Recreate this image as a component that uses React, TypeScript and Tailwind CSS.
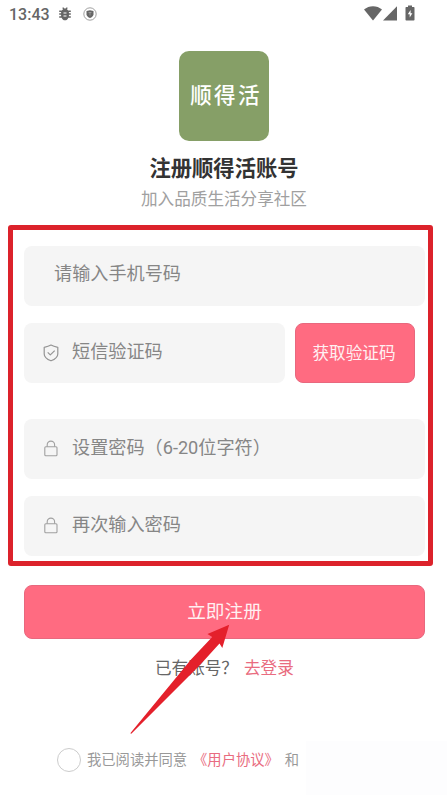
import React from "react";

const LockIcon = () => (
  <svg viewBox="0 0 14 17" className="mb-[2px] h-[17px] w-[14px] shrink-0" fill="none" stroke="#a0a0a0" strokeWidth="1.1">
    <rect x="0.8" y="6.8" width="12.2" height="9" rx="1" />
    <path d="M3.2 6.8V4.8a3.7 3.7 0 0 1 7.4 0v2" />
  </svg>
);

const ShieldIcon = () => (
  <svg viewBox="0 0 16 18" className="h-[18px] w-4 shrink-0" fill="none" stroke="#949494" strokeWidth="1.2" strokeLinejoin="round">
    <path d="M8 1.1C5.8 2.4 3.600 2.900 1.200 3.300v6.600c0 3.300 3.400 5.500 6.800 6.900 3.400-1.400 6.800-3.600 6.800-6.900V3.300C12.400 2.900 10.200 2.400 8 1.100z" />
    <path d="M4.700 8.400l2.600 2.500 4.400-4.300" />
  </svg>
);

const StatusBar = () => (
  <header className="flex h-7 items-center pl-[9px] pr-[32px] text-[#666666]">
    <span className="pt-[2px] font-[Roboto] text-[16px] font-medium leading-[26px]">13:43</span>
    <svg viewBox="0 0 14 14" className="ml-[8px] h-[14px] w-[14px]" fill="#666666">
      <path d="M4.2 1.100l1-.8 1.300 1.200h1L8.800.3l1 .8-1 1.100q.9.5 1.300 1.300H12.800v1.400H10.900V6.300H12.800v1.500H10.900v1.400H12.800v1.500H10.400C9.700 12.400 8.500 13.300 7 13.300s-2.700-.9-3.400-2.600H1.200V9.200h1.900V7.800H1.200V6.300h1.900V4.900H1.200V3.500H3.900q.4-.8 1.300-1.300z" />
      <path d="M5.500 5.400h3v1.100h-3zM5.500 8.400h3v1.100h-3z" fill="#fff" />
    </svg>
    <svg viewBox="0 0 14 14" className="ml-[11px] h-[14px] w-[14px]">
      <circle cx="7" cy="7" r="6.200" fill="none" stroke="#888" strokeWidth="0.800" />
      <path d="M7 3.300l3.500.7v3.200c0 1.900-1.700 3-3.500 3.800-1.800-.8-3.500-1.900-3.500-3.800V4z" fill="#666" />
      <path d="M5.500 5.500h3M7 5.500v3" stroke="#aaa" strokeWidth="0.700" />
    </svg>
    <div className="ml-auto flex items-center pb-[2px]">
      <svg viewBox="0 0 18 15" className="h-[15px] w-[18px]" fill="#666666">
        <path d="M0 3.600C5-.9 13-.9 18 3.600L9 14.600z" />
      </svg>
      <svg viewBox="0 0 14 15" className="ml-[1px] h-[15px] w-[14px]" fill="#666666">
        <path d="M14 0.300v14.200H0z" />
      </svg>
      <svg viewBox="0 0 10 16" className="ml-2 h-4 w-[10px]">
        <path d="M3 .5h4V2h1.700q.8 0 .8.800v12q0 .7-.8.700H1.300q-.8 0-.8-.7v-12q0-.8.800-.8H3z" fill="#666" />
        <path d="M5.600 5L2.800 9.300h1.900v3.300l2.700-4.400H5.600z" fill="#fff" />
      </svg>
    </div>
  </header>
);

const fieldClass =
  "flex h-[60px] items-center rounded-[8px] bg-[#f5f5f5] text-[18.15px] leading-6 text-[#868686]";

export default function App() {
  return (
    <div className="relative flex h-[795px] w-[447px] flex-col overflow-hidden bg-white font-['Noto_Sans_CJK_SC',sans-serif] whitespace-nowrap">
      <StatusBar />
      <section className="flex flex-col items-center pl-px pt-[23px]">
        <div className="flex h-[90px] w-[90px] items-center justify-center rounded-[10px] bg-[#869f67] pb-[3px] pl-[4px] text-[21.5px] font-medium tracking-[2.4px] text-white">
          顺得活
        </div>
        <h1 className="mt-[10px] text-[21.3px] font-bold leading-8 text-[#333333]">注册顺得活账号</h1>
        <p className="mt-[1px] text-[16.6px] leading-7 text-[#a0a0a0]">加入品质生活分享社区</p>
      </section>

      <main className="ml-2 mt-[13px] flex h-[341px] w-[425px] flex-col rounded-[3px] border-[5px] border-[#dc222b] pl-[11px] pr-[3px] pt-4">
        <div className={`${fieldClass} pb-[8px] pl-[30px]`}>请输入手机号码</div>
        <div className="mt-[17px] flex gap-[10px]">
          <div className={`${fieldClass} w-[261px] pl-[19px]`}>
            <ShieldIcon />
            <span className="mb-[6px] ml-[13px]">短信验证码</span>
          </div>
          <button className="h-[60px] w-[120px] rounded-[8px] border border-[#e8687e] bg-[#ff6b81] pb-[2px] pr-[2px] text-[16.6px] text-[#fff0f2]">
            获取验证码
          </button>
        </div>
        <div className={`${fieldClass} mt-[36px] pl-5`}>
          <LockIcon />
          <span className="mb-[5px] ml-[14px]">设置密码（<span className="font-[Roboto]">6-20</span>位字符）</span>
        </div>
        <div className={`${fieldClass} mt-[17px] pl-5`}>
          <LockIcon />
          <span className="mb-[6px] ml-[14px]">再次输入密码</span>
        </div>
      </main>

      <button className="ml-6 mt-[19px] h-[54px] w-[401px] shrink-0 rounded-[8px] border border-[#e8687e] bg-[#ff6b81] pb-[3px] text-[18.7px] text-[#fff0f2]">
        立即注册
      </button>
      <div className="ml-[155px] mt-[16px] flex h-6 items-center text-[16.6px] leading-6 text-[#666666]">
        <span>已有账号？</span>
        <a className="ml-[6px] text-[#e96c80]">去登录</a>
      </div>
      <footer className="ml-[57px] mt-[69px] flex h-6 items-center text-[14.3px] leading-6 text-[#999999]">
        <span className="h-6 w-6 rounded-full border border-[#cccccc]" />
        <span className="mb-[2px] ml-[6px]">我已阅读并同意</span>
        <a className="mb-[2px] ml-[6px] text-[#e96c80]">《用户协议》</a>
        <span className="mb-[2px] ml-[6px]">和</span>
      </footer>
      <div className="absolute bottom-0 right-0 h-[54px] w-[141px] bg-[#fdfdfe]" />

      <svg viewBox="0 0 447 795" className="pointer-events-none absolute inset-0 h-[795px] w-[447px]">
        <path d="M130.300 733.200L191 659.500 212.200 637 207.500 634 229.200 624.800 222.300 648 219.500 643.500 200 665 131.300 733.800z" fill="#e4202b" />
      </svg>
    </div>
  );
}
